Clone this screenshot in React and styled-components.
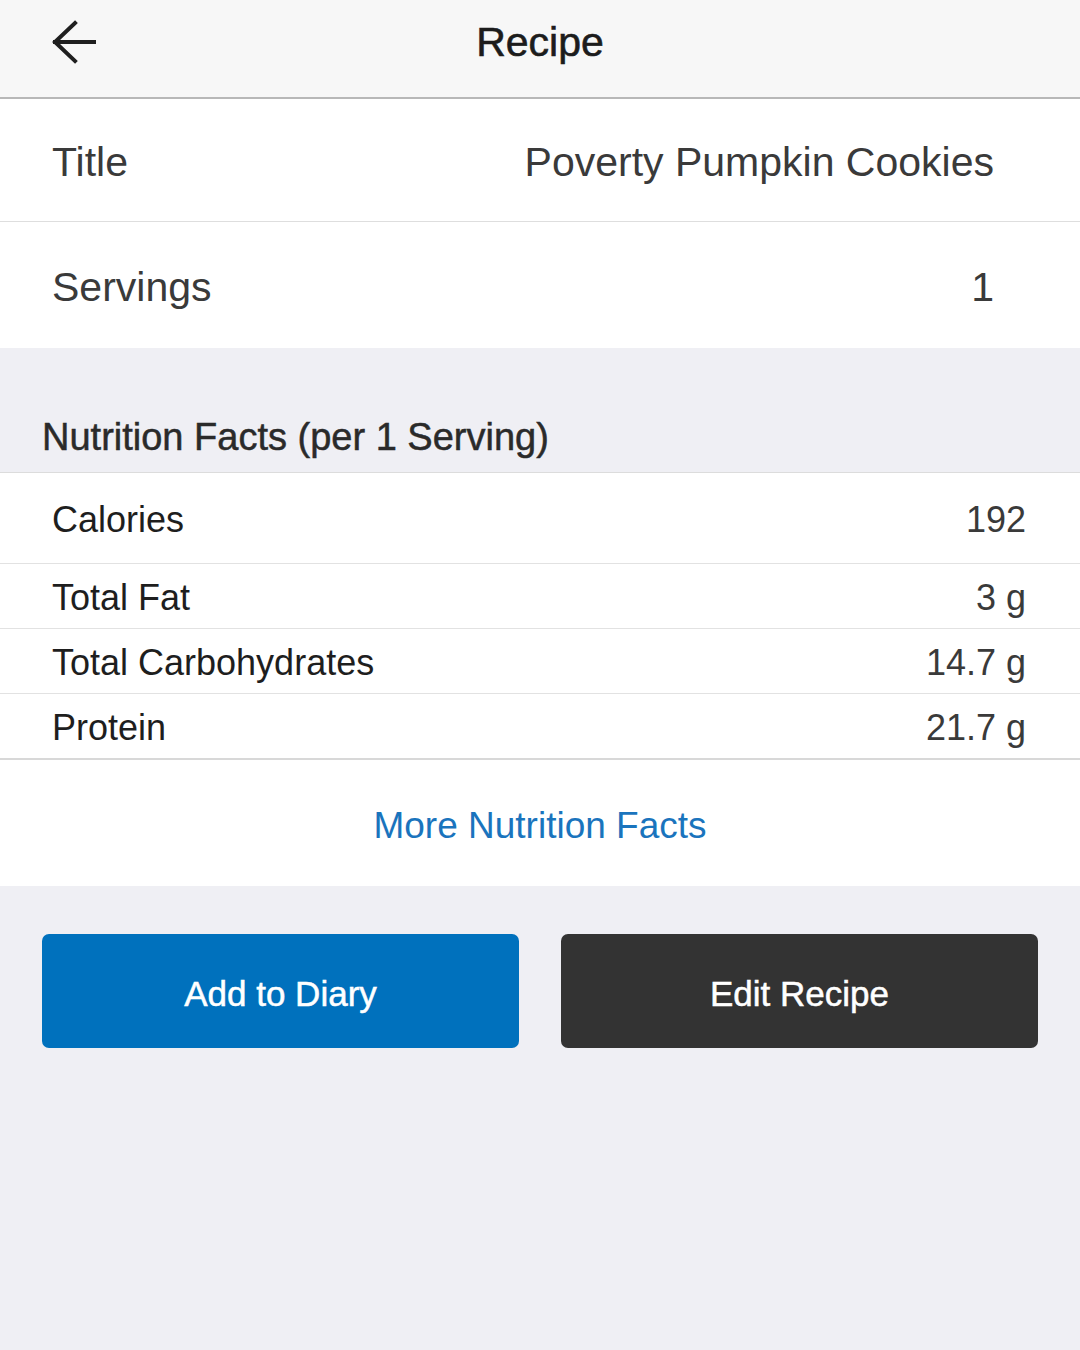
import React from 'react';
import styled, { createGlobalStyle } from 'styled-components';

const GlobalStyle = createGlobalStyle`
    html, body {
        margin: 0;
        padding: 0;
        background: #efeff4;
        font-family: "Liberation Sans", Arial, sans-serif;
        -webkit-font-smoothing: antialiased;
    }
`;

const Page = styled.div`
    width: 1080px;
    min-height: 1350px;
    background: #efeff4;
    display: flex;
    flex-direction: column;
`;

const TopBar = styled.header`
    position: relative;
    height: 97px;
    background: #f7f7f7;
    border-bottom: 2px solid #b8b8b8;
    display: flex;
    align-items: center;
    justify-content: center;
`;

const BackButton = styled.button`
    position: absolute;
    left: 44px;
    top: 14px;
    width: 60px;
    height: 56px;
    border: none;
    background: none;
    padding: 0;
    display: flex;
    align-items: center;
    justify-content: center;
    cursor: pointer;
`;

const TopTitle = styled.h1`
    margin: 0 0 12px;
    font-size: 41px;
    font-weight: 400;
    color: #1c1c1c;
    -webkit-text-stroke: 0.6px #1c1c1c;
`;

const FieldRow = styled.div`
    height: ${p => p.$h}px;
    box-sizing: border-box;
    background: #fff;
    border-bottom: ${p => (p.$border ? '1px solid #dedede' : 'none')};
    display: flex;
    align-items: center;
    justify-content: space-between;
    padding: 4px 86px 0 52px;
`;

const FieldLabel = styled.span`
    font-size: 41px;
    color: #3a3a3a;
`;

const FieldValue = styled.span`
    font-size: 41px;
    color: #3a3a3a;
`;

const SectionHeader = styled.div`
    height: 125px;
    display: flex;
    align-items: flex-end;
    padding: 0 0 13px 42px;
    box-sizing: border-box;
    border-bottom: 1px solid #dcdcdc;
    font-size: 38px;
    color: #2a2a2a;
    -webkit-text-stroke: 0.5px #2a2a2a;
`;

const FactRow = styled.div`
    height: ${p => p.$h}px;
    background: #fff;
    border-bottom: ${p => p.$last ? '2px solid #d8d8d8' : '1px solid #e2e2e2'};
    display: flex;
    align-items: center;
    justify-content: space-between;
    padding: 4px 54px 0 52px;
    box-sizing: content-box;
`;

const FactLabel = styled.span`
    font-size: 36px;
    color: #1e1e1e;
`;

const FactValue = styled.span`
    font-size: 36px;
    color: #3a3a3a;
`;

const MoreRow = styled.div`
    height: 126px;
    background: #fff;
    display: flex;
    align-items: center;
    justify-content: center;
`;

const MoreLink = styled.a`
    font-size: 37px;
    color: #1a74bd;
    text-decoration: none;
    margin-top: 6px;
`;

const Actions = styled.div`
    display: grid;
    grid-template-columns: 1fr 1fr;
    gap: 42px;
    padding: 48px 42px;
`;

const ActionButton = styled.button`
    height: 114px;
    border: none;
    border-radius: 7px;
    background: ${p => p.$dark ? '#333333' : '#0071bd'};
    color: #fff;
    font-family: "Liberation Sans", Arial, sans-serif;
    font-size: 35px;
    padding-top: 6px;
    -webkit-text-stroke: 0.5px #fff;
    cursor: pointer;
`;

const facts = [
    { label: 'Calories', value: '192', h: 86 },
    { label: 'Total Fat', value: '3 g', h: 60 },
    { label: 'Total Carbohydrates', value: '14.7 g', h: 60 },
    { label: 'Protein', value: '21.7 g', h: 60, last: true },
];

const ArrowLeft = () => (
    <svg width="48" height="44" viewBox="0 0 48 44" fill="none" stroke="#1f1f1f" strokeWidth="4" strokeLinecap="square">
        <path d="M5 22 H44" />
        <path d="M25 3 L5 22 L25 41" strokeLinejoin="miter" />
    </svg>
);

export default function App() {
    return (
        <Page>
            <GlobalStyle />
            <TopBar>
                <BackButton aria-label="Back"><ArrowLeft /></BackButton>
                <TopTitle>Recipe</TopTitle>
            </TopBar>
            <FieldRow $h={123} $border>
                <FieldLabel>Title</FieldLabel>
                <FieldValue>Poverty Pumpkin Cookies</FieldValue>
            </FieldRow>
            <FieldRow $h={126}>
                <FieldLabel>Servings</FieldLabel>
                <FieldValue>1</FieldValue>
            </FieldRow>
            <SectionHeader>Nutrition Facts (per 1 Serving)</SectionHeader>
            {facts.map(f => (
                <FactRow key={f.label} $h={f.h} $last={f.last}>
                    <FactLabel>{f.label}</FactLabel>
                    <FactValue>{f.value}</FactValue>
                </FactRow>
            ))}
            <MoreRow>
                <MoreLink href="#">More Nutrition Facts</MoreLink>
            </MoreRow>
            <Actions>
                <ActionButton>Add to Diary</ActionButton>
                <ActionButton $dark>Edit Recipe</ActionButton>
            </Actions>
        </Page>
    );
}
